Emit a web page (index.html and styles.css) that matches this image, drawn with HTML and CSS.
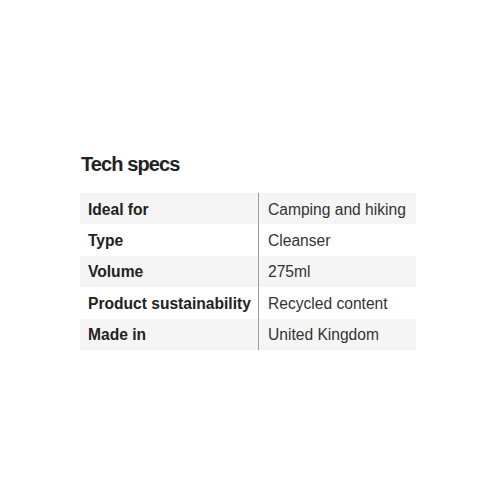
FILE: index.html
```html
<!DOCTYPE html>
<html>
<head>
<meta charset="utf-8">
<link rel="stylesheet" href="styles.css">
</head>
<body>
<div class="specs">
  <h2 class="title">Tech specs</h2>
  <table class="table">
    <tr class="row alt"><th class="label">Ideal for</th><td class="value">Camping and hiking</td></tr>
    <tr class="row"><th class="label">Type</th><td class="value">Cleanser</td></tr>
    <tr class="row alt"><th class="label">Volume</th><td class="value">275ml</td></tr>
    <tr class="row"><th class="label">Product sustainability</th><td class="value">Recycled content</td></tr>
    <tr class="row alt"><th class="label">Made in</th><td class="value">United Kingdom</td></tr>
  </table>
</div>
</body>
</html>
```
FILE: styles.css
```css
html, body {
  margin: 0;
  padding: 0;
  background: #fff;
}
body {
  font-family: "Liberation Sans", Arial, sans-serif;
  color: #222;
}
.specs {
  padding: 152px 0 0 80px;
}
.title {
  margin: 0 0 0 1px;
  font-size: 20px;
  font-weight: 700;
  line-height: 24px;
  letter-spacing: -0.9px;
  color: #222;
}
.table {
  margin-top: 17px;
  border-collapse: collapse;
  width: 336px;
}
.row {
  height: 31.4px;
}
.alt {
  background: #f5f5f5;
}
.label {
  width: 170px;
  padding: 2px 0 0 8px;
  text-align: left;
  font-size: 15.6px;
  font-weight: 700;
  color: #222;
  border-right: 1px solid #9a9a9a;
  white-space: nowrap;
}
.value {
  padding: 2px 0 0 9px;
  font-size: 15.6px;
  color: #333;
  white-space: nowrap;
}
```
